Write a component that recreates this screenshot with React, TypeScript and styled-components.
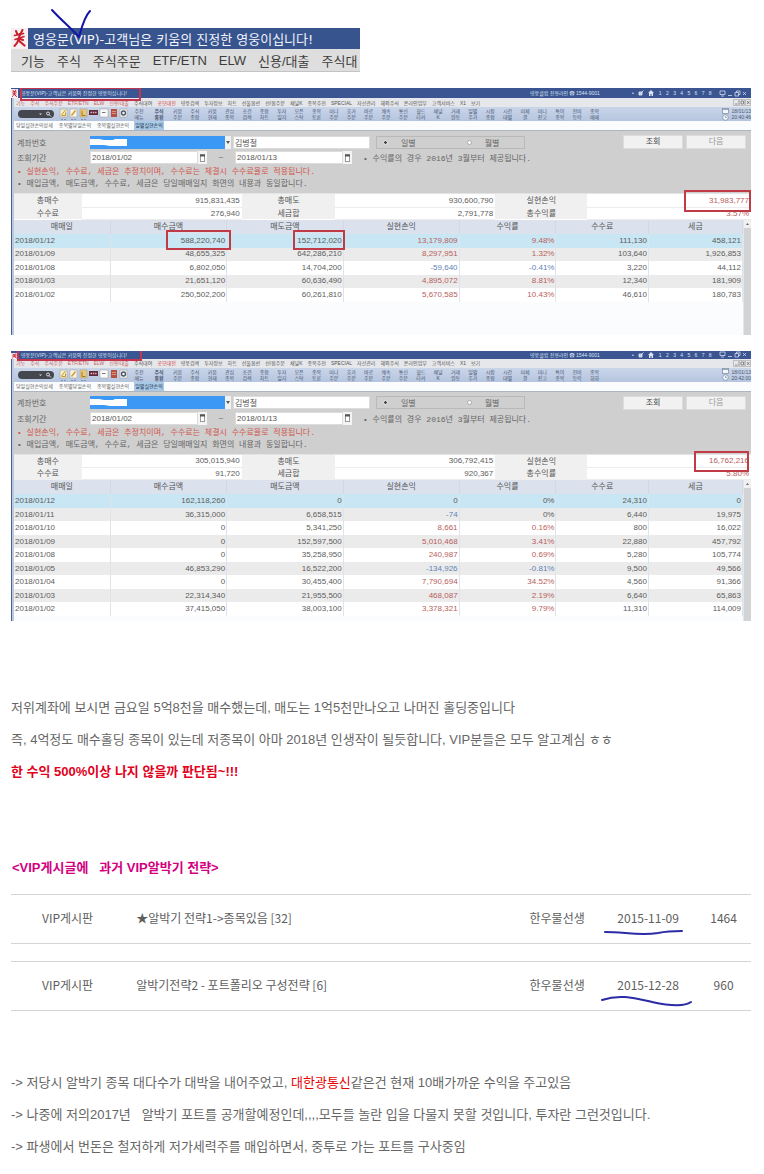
import React, { useId } from 'react';
import styled, { createGlobalStyle, css } from 'styled-components';

const sans = '"Liberation Sans", "Noto Sans CJK KR", sans-serif';
const mono = '"Liberation Mono", "Noto Sans CJK KR", monospace';
const cjk = '"Noto Sans CJK KR", sans-serif';

const GlobalStyle = createGlobalStyle`
  * { box-sizing: border-box; }
  body { margin: 0; background: #fff; font-family: ${sans}; color: #666; }
  input, button, select { font: inherit; color: inherit; border-radius: 0; margin: 0; }
  table { border-collapse: collapse; border-spacing: 0; }
  th, td { padding: 0; font-weight: 400; }
  p, h2 { margin: 0; }
`;

const Page = styled.main`
  display: flex;
  flex-direction: column;
  padding: 28px 13px 10px 11px;
`;

/* ---- enlarged title strip ---- */

const Banner = styled.header`
  position: relative;
  width: 349px;
  max-width: 100%;
  margin-bottom: 16px;
  font-size: 13px;
`;

const BannerTitle = styled.div`
  display: flex;
  align-items: center;
  gap: 5px;
  height: 21px;
  background: #38548f;
  color: #f2f5fa;
  font-family: "DejaVu Sans", ${cjk};
  white-space: nowrap;
`;

const BannerMenu = styled.nav`
  display: flex;
  align-items: center;
  gap: 12px;
  height: 23px;
  padding-left: 10px;
  background: #dedede;
  border-bottom: 1px solid #c4c4c4;
  color: #3c3c3c;
  white-space: nowrap;
`;

const MenuLink = styled.a<{ $color?: string }>`
  flex: none;
  color: ${p => p.$color ?? 'inherit'};
  text-decoration: none;
`;

const PenCheck = styled.svg`
  position: absolute;
  left: 38px;
  top: -20px;
  pointer-events: none;
`;

/* ---- trading window ---- */

const Window = styled.section`
  margin-bottom: 16px;
  font-size: 8px;
  white-space: nowrap;
  color: #5c5c5c;
`;

const TitleBar = styled.div<{ $cut?: boolean }>`
  position: relative;
  display: flex;
  align-items: ${p => (p.$cut ? 'flex-end' : 'center')};
  height: ${p => (p.$cut ? 8 : 10)}px;
  padding-right: 5px;
  background: #3a5591;
  color: #dce4f3;
  font-size: 5px;
  line-height: 8px;
`;

const TitleText = styled.span`
  flex: 1;
  padding-left: 3px;
`;

const TitleLine = styled.span`
  width: 102px;
`;

const TitleTools = styled.span`
  display: flex;
  align-items: center;
  justify-content: space-between;
  width: 114px;
  height: 8px;
`;

const TitleMark = styled.span<{ $cut?: boolean }>`
  position: absolute;
  left: ${p => (p.$cut ? 6 : 9)}px;
  top: 0;
  width: ${p => (p.$cut ? 125 : 121)}px;
  height: ${p => (p.$cut ? 10 : 13)}px;
  border: 2px solid #c2374f;
  border-top-width: ${p => (p.$cut ? 0 : 1)}px;
`;

const Frame = styled.div`
  border-left: 1px solid #4a6196;
  box-shadow: inset 2px 0 0 #bcc8de;
  padding-left: 2px;
`;

const MenuBar = styled.nav`
  display: flex;
  align-items: center;
  gap: 5px;
  height: 9px;
  padding-left: 2px;
  background: #e6e7ea;
  color: #555;
  font-size: 5px;
  line-height: 8px;
`;

const MenuEnd = styled.span`
  display: flex;
  margin-left: auto;
`;

const Toolbar = styled.div`
  display: flex;
  align-items: center;
  height: 14px;
  padding-left: 4px;
  background: linear-gradient(#c9d5e9, #b6c5df);
  color: #4b5873;
  font-size: 5px;
  line-height: 6px;
`;

const SearchPill = styled.label`
  display: flex;
  align-items: center;
  justify-content: flex-end;
  width: 36px;
  height: 8px;
  margin-right: 5px;
  padding-right: 2px;
  border-radius: 4px;
  background: #44474d;
`;

const PillInput = styled.input`
  flex: 1;
  min-width: 0;
  height: 6px;
  padding: 0 3px;
  border: 0;
  background: transparent;
`;

const ToolGroup = styled.div`
  display: flex;
  justify-content: space-between;
  width: 434px;
`;

const ToolButton = styled.button<{ $wide?: boolean; $strong?: boolean }>`
  width: ${p => (p.$wide ? 20 : 17)}px;
  height: 13px;
  padding: 0;
  border: 0;
  background: none;
  line-height: 6px;
  text-align: center;
  font-weight: ${p => (p.$strong ? 700 : 400)};
`;

const Clock = styled.div`
  display: flex;
  align-items: center;
  gap: 3px;
  margin-left: auto;
`;

const Tabs = styled.div`
  display: flex;
  gap: 4px;
  height: 10px;
  padding-left: 1px;
  background: #fbfcfd;
  border-bottom: 1px solid #aeb5c0;
`;

const Tab = styled.button<{ $active?: boolean }>`
  padding: 0 1px;
  border: 0;
  background: ${p => (p.$active ? '#a9cbe8' : 'none')};
  color: ${p => (p.$active ? '#23344f' : '#666')};
  font-size: 5px;
  line-height: 9px;
`;

const Form = styled.form`
  padding: 4px 5px 3px 3px;
  background: #cfcfcf;
  border-bottom: 1px solid #e4e4e4;
  color: #666;
  font-family: ${mono};
`;

const FormRow = styled.div<{ $h: number }>`
  display: flex;
  align-items: center;
  height: ${p => p.$h}px;
  margin-bottom: 2px;
`;

const FieldLabel = styled.label`
  width: 73px;
`;

const AccountBox = styled.div`
  position: relative;
  display: flex;
  width: 141px;
  height: 13px;
  margin-right: 2px;
`;

const Account = styled.select`
  appearance: none;
  flex: 1;
  border: 0;
  background: #3b98f5;
`;

const Arrow = styled.span`
  display: flex;
  align-items: center;
  justify-content: center;
  width: 6px;
  background: #f1f1f1;
`;

const Smudge = styled.svg`
  position: absolute;
  left: 0;
  top: 3px;
`;

const Field = styled.input<{ $w: number }>`
  width: ${p => p.$w}px;
  height: 13px;
  padding: 0 1px;
  border: 1px solid #dcdcdc;
  background: #fff;
  color: #555;
  font-family: ${sans};
`;

const CalendarButton = styled.button`
  display: flex;
  align-items: center;
  justify-content: center;
  width: 9px;
  height: 13px;
  padding: 0;
  border: 0;
  background: #f4f4f4;
`;

const Tilde = styled.span`
  width: 28px;
  text-align: center;
`;

const Choice = styled.div`
  display: flex;
  align-items: center;
  gap: 51px;
  width: 149px;
  height: 13px;
  margin-left: 6px;
  padding-left: 6px;
  border: 1px solid #b9b9b9;
`;

const ChoiceLabel = styled.label`
  display: flex;
  align-items: center;
  gap: 13px;
`;

const Radio = styled.input`
  appearance: none;
  width: 5px;
  height: 5px;
  border: 1px solid #aaa;
  border-radius: 50%;
  background: #fff;
  &:checked { background: #444; outline: 1px solid #f4f4f4; outline-offset: -1px; border-color: #999; }
`;

const Actions = styled.div`
  display: flex;
  gap: 3px;
  margin-left: auto;
`;

const Action = styled.button<{ $dim?: boolean }>`
  width: 60px;
  height: 14px;
  padding: 0;
  border: 1px solid #dcdcdc;
  background: #f1f1f1;
  color: ${p => (p.$dim ? '#999' : '#444')};
  line-height: 12px;
`;

const Note = styled.p<{ $red?: boolean }>`
  line-height: 12px;
  color: ${p => (p.$red ? '#d0584e' : '#666')};
`;

const InlineNote = styled.span`
  margin-left: 11px;
`;

const Summary = styled.table`
  width: 100%;
  table-layout: fixed;
  line-height: 11px;
  th { background: #f0f0f0; font-family: ${mono}; color: #555; }
  td { position: relative; background: #fff; padding-right: 2px; text-align: right; border-bottom: 1px solid #ececec; }
  tr { height: 13px; }
  tr:last-child { height: 12px; }
`;

const Tint = styled.span<{ $tone: 'up' | 'down' | 'plain' }>`
  color: ${p => ({ up: '#b8605c', down: '#5f83b8', plain: 'inherit' })[p.$tone]};
`;

const Marker = styled.span<{ $w: number; $right: number; $bottom: number }>`
  position: absolute;
  z-index: 1;
  top: -4px;
  right: ${p => p.$right}px;
  bottom: ${p => p.$bottom}px;
  width: ${p => p.$w}px;
  border: 2px solid #bf3c46;
`;

const GridArea = styled.div<{ $tail: number }>`
  display: flex;
  background: #fbfcfe;
  & > div:first-child { flex: 1; padding-bottom: ${p => p.$tail}px; }
`;

const ScrollTrack = styled.div`
  width: 8px;
  background: #d2d3d5;
  border-left: 1px solid #e6e6e6;
  text-align: center;
  line-height: 0;
`;

const Grid = styled.table`
  width: 100%;
  table-layout: fixed;
  line-height: 12px;
  thead tr { height: 14px; background: #dbe2ee; }
  th { font-family: ${mono}; color: #555; border-right: 1px solid #d2d9e6; }
  tbody tr { height: 13px; background: #ebebeb; }
  tbody tr:nth-child(odd) { height: 14px; background: #fff; }
  tbody tr:first-child { background: #c8e6f3; }
  td { position: relative; padding: 0 1px; text-align: right; border-right: 1px solid #dfe4ea; }
  td:first-child { text-align: left; }
`;

/* ---- article ---- */

const Line = styled.p<{ $tone?: 'alert' }>`
  font-size: 13px;
  line-height: 32px;
  ${p => p.$tone === 'alert' && css`color: #e2001c; font-weight: 700;`}
`;

const Opening = styled.section`
  padding: 55px 0 64px;
`;

const Heading = styled.h2`
  margin-bottom: 10px;
  padding-left: 1px;
  color: #d3007f;
  font-size: 13px;
  line-height: 32px;
  white-space: pre;
`;

const Hot = styled.span`
  color: #e60000;
`;

const Closing = styled.section`
  padding-top: 39px;
  white-space: pre-wrap;
`;

const Board = styled.table`
  width: 100%;
  margin-bottom: 17px;
  table-layout: fixed;
  border-top: 1px solid #d4d4d4;
  border-bottom: 1px solid #d4d4d4;
  font-family: ${cjk};
  font-size: 12px;
  color: #5e5e5e;
  td { height: 49px; padding-bottom: 3px; text-align: center; }
  td:nth-child(2) { text-align: left; padding-left: 12px; }
`;

const DateCell = styled.td`
  position: relative;
`;

const PenLine = styled.svg`
  position: absolute;
  left: 0;
  bottom: 2px;
`;

type Row = string[];

const MENU = ['기능', '주식', '주식주문', 'ETF/ETN', 'ELW', '신용/대출', '주식대여', '공모대전', '영웅검색', '투자정보', '차트', '선물옵션', '선/옵주문', '채널K', '종목추천', 'SPECIAL', '자산관리', '해외주식', '온라인업무', '고객서비스', 'X1', '보기'];

const TOOLS = ['키움 주문', '주식 종합', '키움 현재', '관심 종목', '조건 검색', '종합 차트', '투자 일지', '오픈 스탁', '종목 토론', '미니 주문', '호가 주문', '바로 주문', '쾌속 주문', '통신 주문', '월드 타커', '채널 K', '거래 원동', '일별 주가', '시장 종합', '시간 대별', '미체 결', '미니 잔고', '특이 종목', '전비 등락', '종목 매매'];

const HEADS = ['매매일', '매수금액', '매도금액', '실현손익', '수익률', '수수료', '세금'];
const WIDTHS = ['13.2%', '16%', '16%', '15.9%', '13.3%', '12.7%', '12.9%'];

const FIRST: Row[] = [
  ['2018/01/12', '588,220,740', '152,712,020', '13,179,809', '9.48%', '111,130', '458,121'],
  ['2018/01/09', '48,655,325', '642,286,210', '8,297,951', '1.32%', '103,640', '1,926,853'],
  ['2018/01/08', '6,802,050', '14,704,200', '-59,640', '-0.41%', '3,220', '44,112'],
  ['2018/01/03', '21,651,120', '60,636,490', '4,895,072', '8.81%', '12,340', '181,909'],
  ['2018/01/02', '250,502,200', '60,261,810', '5,670,585', '10.43%', '46,610', '180,783'],
];

const SECOND: Row[] = [
  ['2018/01/12', '162,118,260', '0', '0', '0%', '24,310', '0'],
  ['2018/01/11', '36,315,000', '6,658,515', '-74', '0%', '6,440', '19,975'],
  ['2018/01/10', '0', '5,341,250', '8,661', '0.16%', '800', '16,022'],
  ['2018/01/09', '0', '152,597,500', '5,010,468', '3.41%', '22,880', '457,792'],
  ['2018/01/08', '0', '35,258,950', '240,987', '0.69%', '5,280', '105,774'],
  ['2018/01/05', '46,853,290', '16,522,200', '-134,926', '-0.81%', '9,500', '49,566'],
  ['2018/01/04', '0', '30,455,400', '7,790,694', '34.52%', '4,560', '91,366'],
  ['2018/01/03', '22,314,340', '21,955,500', '468,087', '2.19%', '6,640', '65,863'],
  ['2018/01/02', '37,415,050', '38,003,100', '3,378,321', '9.79%', '11,310', '114,009'],
];

const tone = (col: number, v: string) =>
  col !== 3 && col !== 4 ? 'plain' : v.startsWith('-') ? 'down' : v === '0' || v === '0%' ? 'plain' : 'up';

const HeroLogo = ({ w, h }: { w: number; h: number }) => (
  <svg width={w} height={h} viewBox="0 0 17 21" preserveAspectRatio="none" aria-hidden="true">
    <rect width="17" height="21" fill="#f6eef0" />
    <g fill="none" stroke="#c6202c" strokeLinecap="round">
      <path d="M5 3l1.5 3.5M11.500 2L9 7" strokeWidth="2" />
      <path d="M3.500 7.500l9-2M4 11.500l9-3" strokeWidth="1.600" />
      <path d="M8.500 6c0 5-2 9-5 12" strokeWidth="2" />
      <path d="M7 12l6.500 5.500M9 11l3 1" strokeWidth="2.200" />
    </g>
  </svg>
);

const ToolIcons = () => (
  <svg width="70" height="14" viewBox="0 0 70 14" aria-hidden="true">
    <g stroke="#9a9a90" strokeWidth=".5">
      <rect x="1" y="2" width="7" height="8" fill="#f3edc9" />
      <rect x="11" y="2" width="7" height="8" fill="#faf5e6" />
      <rect x="21" y="2" width="7" height="8" fill="#e8c777" />
      <rect x="41" y="2" width="8" height="8" fill="#fafafa" />
      <rect x="61" y="2" width="7" height="8" fill="#eef1f5" />
    </g>
    <path d="M2.500 8.500h4v-3M2.500 8l4-5" stroke="#c89a2d" fill="none" />
    <path d="M12.500 8.500l4-5" stroke="#d59a35" strokeWidth="1.500" />
    <path d="M23 4v4.500h3.500" stroke="#a8772e" fill="none" />
    <rect x="30" y="3" width="9" height="5" fill="#5d2c3c" />
    <path d="M31.500 5.500h6" stroke="#e9b6bd" strokeDasharray="1.500 .8" strokeWidth="1.500" />
    <path d="M43 5.500h3.500" stroke="#777" />
    <rect x="52" y="2" width="6" height="8" fill="#b5513e" />
    <path d="M53 4.500h4M53 6.500h4" stroke="#eeb29b" strokeWidth=".7" />
    <circle cx="64.500" cy="6" r="2" fill="none" stroke="#4c5563" strokeWidth="1.300" />
    <path d="M2 12.500h5M12 12.500h5M22 12.500h5" stroke="#8291ad" strokeDasharray="2 1" />
  </svg>
);

const CalendarIcon = () => (
  <svg width="5" height="8" viewBox="0 0 5 8" aria-hidden="true">
    <rect x=".5" y=".5" width="4" height="7" fill="#fff" stroke="#999" />
    <path d="M0 1.500h5" stroke="#555" strokeWidth="2" />
  </svg>
);

interface WindowProps {
  cut?: boolean;
  time: string;
  totals: string[];
  rows: Row[];
  tail: number;
  flagWidth: number;
  flagRight: number;
  flagCells?: boolean;
  lastTool: string;
}

function TradingWindow({ cut, time, totals, rows, tail, flagWidth, flagRight, flagCells, lastTool }: WindowProps) {
  const id = useId();
  return (
    <Window>
      <TitleBar $cut={cut}>
        <HeroLogo w={7} h={cut ? 6 : 9} />
        <TitleText>영웅문(VIP)-고객님은 키움의 진정한 영웅이십니다!</TitleText>
        <TitleLine>영웅클럽 전용라인 ☎ 1544-9001</TitleLine>
        <TitleTools>
          <span>•</span>
          <svg width="6" height="6" viewBox="0 0 6 6" aria-hidden="true"><path d="M1 2h3v3H1zM3 3l2.500-2.500" fill="#b9c7e2" stroke="#e7edf8" strokeWidth=".8" /></svg>
          <svg width="6" height="6" viewBox="0 0 6 6" aria-hidden="true"><path d="M0 3l3-3 3 3H5v3H3.500V4h-1v2H1V3z" fill="#dce4f3" /></svg>
          {[1, 2, 3, 4, 5, 6, 7, 8].map(n => <span key={n}>{n}</span>)}
          <svg width="30" height="7" viewBox="0 0 30 7" fill="none" stroke="#d3dcee" strokeWidth=".8" aria-hidden="true">
            <path d="M4 1h5v3.500H4zM5 6h3M12 5.500h4M19 2.500h3.500V6H19zM20.500 2.500V1H24v3.500h-1.500M27 2l3 3M30 2l-3 3" />
          </svg>
        </TitleTools>
        <TitleMark $cut={cut} />
      </TitleBar>
      <Frame>
        <MenuBar>
          {MENU.map((m, i) => (
            <MenuLink key={m} href="#" $color={i < 6 ? '#c4625e' : i === 7 ? '#d23a3a' : undefined}>{m}</MenuLink>
          ))}
          <MenuEnd>
            <svg width="18" height="7" viewBox="0 0 18 7" fill="none" stroke="#666" strokeWidth=".7" aria-hidden="true">
              <path d="M.5.500h5v6h-5zM6.500.500h5v6h-5zM12.500.500h5v6h-5z" stroke="#aaa" />
              <path d="M2 5h2.500M8 2h2.500v3H8zM14 2l2.500 3M16.500 2L14 5" />
            </svg>
          </MenuEnd>
        </MenuBar>
        <Toolbar>
          <SearchPill>
            <PillInput aria-label="화면검색" />
            <svg width="14" height="6" viewBox="0 0 14 6" fill="none" stroke="#d9dce0" aria-hidden="true">
              <path d="M1 2.500h3L2.500 4z" fill="#d9dce0" stroke="none" />
              <circle cx="10" cy="2.500" r="1.500" /><path d="M11 3.500l2 2" />
            </svg>
          </SearchPill>
          <ToolIcons />
          <ToolButton $wide type="button">주전<br />메뉴</ToolButton>
          <ToolButton $wide $strong type="button">주식<br />통합</ToolButton>
          <ToolGroup>
            {[...TOOLS.slice(0, -1), lastTool].map((t, i) => {
              const [a, b] = t.split(' ');
              return <ToolButton key={i} type="button">{a}<br />{b}</ToolButton>;
            })}
          </ToolGroup>
          <Clock>
            <svg width="7" height="13" viewBox="0 0 7 13" fill="#f3f6fa" stroke="#7786a2" strokeWidth=".7" aria-hidden="true">
              <rect x=".5" y=".5" width="6" height="5" /><path d="M.5 1.500h6" /><circle cx="3.500" cy="9.500" r="2.800" /><path d="M3.500 8v1.500H5" />
            </svg>
            <span>18/01/13<br />{time}</span>
          </Clock>
        </Toolbar>
        <Tabs>
          <Tab type="button">당일실현손익상세</Tab>
          <Tab type="button">종목별당일손익</Tab>
          <Tab type="button">종목별실현손익</Tab>
          <Tab type="button" $active>일별실현손익</Tab>
        </Tabs>
        <Form onSubmit={e => e.preventDefault()}>
          <FormRow $h={14}>
            <FieldLabel htmlFor={`${id}acc`}>계좌번호</FieldLabel>
            <AccountBox>
              <Account id={`${id}acc`}><option /></Account>
              <Arrow><svg width="4" height="3" viewBox="0 0 4 3" aria-hidden="true"><path d="M0 0h4L2 3z" fill="#555" /></svg></Arrow>
              <Smudge width="38" height="8" viewBox="0 0 38 8" aria-hidden="true">
                <path d="M0 0h9l5 1h9l2-1h12v7H20l-6-1H0z" fill="#fdfdfd" />
              </Smudge>
            </AccountBox>
            <Field $w={137} aria-label="예금주" defaultValue="김병철" />
            <Choice>
              <ChoiceLabel><Radio type="radio" name={`${id}unit`} defaultChecked />일별</ChoiceLabel>
              <ChoiceLabel><Radio type="radio" name={`${id}unit`} />월별</ChoiceLabel>
            </Choice>
            <Actions>
              <Action type="submit">조회</Action>
              <Action type="button" $dim>다음</Action>
            </Actions>
          </FormRow>
          <FormRow $h={13}>
            <FieldLabel htmlFor={`${id}from`}>조회기간</FieldLabel>
            <Field $w={108} id={`${id}from`} defaultValue="2018/01/02" />
            <CalendarButton type="button" aria-label="시작일"><CalendarIcon /></CalendarButton>
            <Tilde>~</Tilde>
            <Field $w={108} aria-label="종료일" defaultValue="2018/01/13" />
            <CalendarButton type="button" aria-label="종료일 선택"><CalendarIcon /></CalendarButton>
            <InlineNote>• 수익률의 경우 2016년 3월부터 제공됩니다.</InlineNote>
          </FormRow>
          <Note $red>• 실현손익, 수수료, 세금은 추정치이며, 수수료는 체결시 수수료율로 적용됩니다.</Note>
          <Note>• 매입금액, 매도금액, 수수료, 세금은 당일매매일지 화면의 내용과 동일합니다.</Note>
        </Form>
        <Summary>
          <colgroup>
            {['9.2%', '21.7%', '12.7%', '21.7%', '12.5%', '22.2%'].map((w, i) => <col key={i} style={{ width: w }} />)}
          </colgroup>
          <tbody>
            <tr>
              <th scope="row">총매수</th><td>{totals[0]}</td>
              <th scope="row">총매도</th><td>{totals[1]}</td>
              <th scope="row">실현손익</th>
              <td><Tint $tone="up">{totals[2]}</Tint><Marker $w={flagWidth} $right={flagRight} $bottom={-5} /></td>
            </tr>
            <tr>
              <th scope="row">수수료</th><td>{totals[3]}</td>
              <th scope="row">세금합</th><td>{totals[4]}</td>
              <th scope="row">총수익률</th><td><Tint $tone="up">{totals[5]}</Tint></td>
            </tr>
          </tbody>
        </Summary>
        <GridArea $tail={tail}>
          <div>
            <Grid>
              <colgroup>{WIDTHS.map((w, i) => <col key={i} style={{ width: w }} />)}</colgroup>
              <thead><tr>{HEADS.map(h => <th key={h} scope="col">{h}</th>)}</tr></thead>
              <tbody>
                {rows.map((r, y) => (
                  <tr key={r[0]}>
                    {r.map((v, x) => (
                      <td key={x}>
                        <Tint $tone={tone(x, v)}>{v}</Tint>
                        {flagCells && y === 0 && x === 1 && <Marker $w={65} $right={-5} $bottom={-2} />}
                        {flagCells && y === 0 && x === 2 && <Marker $w={52} $right={-2} $bottom={-2} />}
                      </td>
                    ))}
                  </tr>
                ))}
              </tbody>
            </Grid>
          </div>
          <ScrollTrack>
            <svg width="7" height="8" viewBox="0 0 7 8" aria-hidden="true"><rect width="7" height="8" fill="#f0f0f0" /><path d="M2 5l1.500-2L5 5z" fill="#666" /></svg>
          </ScrollTrack>
        </GridArea>
      </Frame>
    </Window>
  );
}

interface BoardProps { title: string; date: string; views: string; stroke: string }

const BoardEntry = ({ title, date, views, stroke }: BoardProps) => (
  <Board>
    <colgroup>
      {['15.3%', '52.7%', '11.6%', '13%', '7.4%'].map((w, i) => <col key={i} style={{ width: w }} />)}
    </colgroup>
    <tbody>
      <tr>
        <td>VIP게시판</td>
        <td>{title}</td>
        <td>한우물선생</td>
        <DateCell>
          {date}
          <PenLine width="96" height="14" viewBox="0 0 96 14" fill="none" stroke="#2b2ba6" strokeWidth="2" strokeLinecap="round" aria-hidden="true">
            <path d={stroke} />
          </PenLine>
        </DateCell>
        <td>{views}</td>
      </tr>
    </tbody>
  </Board>
);

export default function App() {
  return (
    <Page>
      <GlobalStyle />
      <Banner>
        <BannerTitle>
          <HeroLogo w={17} h={21} />
          <span>영웅문(VIP)-고객님은 키움의 진정한 영웅이십니다!</span>
        </BannerTitle>
        <BannerMenu>
          {['기능', '주식', '주식주문', 'ETF/ETN', 'ELW', '신용/대출', '주식대'].map(m => <MenuLink key={m} href="#">{m}</MenuLink>)}
        </BannerMenu>
        <PenCheck width="44" height="34" viewBox="0 0 44 34" fill="none" stroke="#1414a8" strokeWidth="2" strokeLinecap="round" strokeLinejoin="round" aria-hidden="true">
          <path d="M3 2c8 9 18 17 27 27C32 22 35 9 41 3" />
        </PenCheck>
      </Banner>

      <TradingWindow
        time="20:40:46"
        totals={['915,831,435', '930,600,790', '31,983,777', '276,940', '2,791,778', '3.57%']}
        rows={FIRST}
        tail={33}
        flagWidth={67}
        flagRight={0}
        flagCells
        lastTool="종목 매매"
      />
      <TradingWindow
        cut
        time="20:42:00"
        totals={['305,015,940', '306,792,415', '16,762,216', '91,720', '920,367', '5.80%']}
        rows={SECOND}
        tail={5}
        flagWidth={55}
        flagRight={2}
        lastTool="종목 회화"
      />

      <Opening>
        <Line>저위계좌에 보시면 금요일 5억8천을 매수했는데, 매도는 1억5천만나오고 나머진 홀딩중입니다</Line>
        <Line>즉, 4억정도 매수홀딩 종목이 있는데 저종목이 아마 2018년 인생작이 될듯합니다, VIP분들은 모두 알고계심 ㅎㅎ</Line>
        <Line $tone="alert">한 수익 500%이상 나지 않을까 판단됨~!!!</Line>
      </Opening>

      <Heading>{'<VIP게시글에   과거 VIP알박기 전략>'}</Heading>
      <BoardEntry title="★알박기 전략1->종목있음 [32]" date="2015-11-09" views="1464" stroke="M5 5C24 5 40 9 58 6C68 4 74 4 82 4" />
      <BoardEntry title="알박기전략2 - 포트폴리오 구성전략 [6]" date="2015-12-28" views="960" stroke="M2 6C20 0 34 4 52 8C66 11 84 13 91 8" />

      <Closing>
        <Line>{'-> 저당시 알박기 종목 대다수가 대박을 내어주었고, '}<Hot>대한광통신</Hot>같은건 현재 10배가까운 수익을 주고있음</Line>
        <Line>{'-> 나중에 저의2017년   알박기 포트를 공개할예정인데,,,,모두들 놀란 입을 다물지 못할 것입니다, 투자란 그런것입니다.'}</Line>
        <Line>{'-> 파생에서 번돈은 철저하게 저가세력주를 매입하면서, 중투로 가는 포트를 구사중임'}</Line>
      </Closing>
    </Page>
  );
}
